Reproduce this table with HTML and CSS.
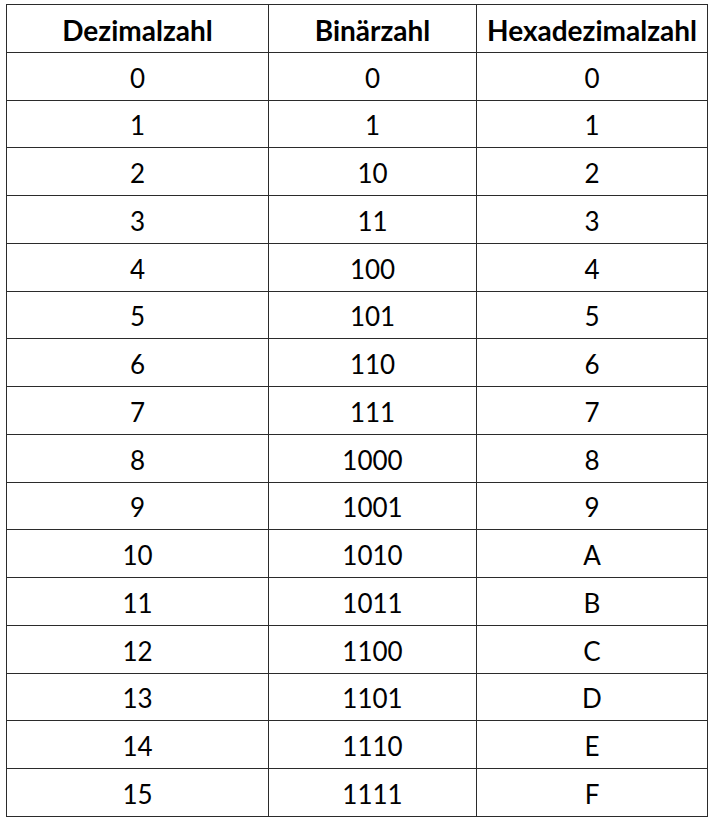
FILE: index.html
```html
<!DOCTYPE html>
<html lang="de">
<head>
<meta charset="utf-8">
<link rel="stylesheet" href="styles.css">
</head>
<body>
<table class="tbl">
<colgroup><col class="c1"><col class="c2"><col class="c3"></colgroup>
<thead>
<tr><th>Dezimalzahl</th><th>Binärzahl</th><th>Hexadezimalzahl</th></tr>
</thead>
<tbody>
<tr><td>0</td><td>0</td><td>0</td></tr>
<tr><td>1</td><td>1</td><td>1</td></tr>
<tr><td>2</td><td>10</td><td>2</td></tr>
<tr><td>3</td><td>11</td><td>3</td></tr>
<tr><td>4</td><td>100</td><td>4</td></tr>
<tr><td>5</td><td>101</td><td>5</td></tr>
<tr><td>6</td><td>110</td><td>6</td></tr>
<tr><td>7</td><td>111</td><td>7</td></tr>
<tr><td>8</td><td>1000</td><td>8</td></tr>
<tr><td>9</td><td>1001</td><td>9</td></tr>
<tr><td>10</td><td>1010</td><td>A</td></tr>
<tr><td>11</td><td>1011</td><td>B</td></tr>
<tr><td>12</td><td>1100</td><td>C</td></tr>
<tr><td>13</td><td>1101</td><td>D</td></tr>
<tr><td>14</td><td>1110</td><td>E</td></tr>
<tr><td>15</td><td>1111</td><td>F</td></tr>
</tbody>
</table>
</body>
</html>
```
FILE: styles.css
```css
html, body {
  margin: 0;
  background: #ffffff;
}
body {
  padding: 4px 0 0 6px;
}
.tbl {
  border-collapse: collapse;
  table-layout: fixed;
  width: 701px;
  font-family: Lato, "Noto Sans", sans-serif;
  color: #000;
}
.c1 { width: 262px; }
.c2 { width: 208px; }
.c3 { width: 231px; }
.tbl th, .tbl td {
  border: 1px solid #2b2b2b;
  height: 47.76px;
  padding: 3px 0 0 0;
  box-sizing: border-box;
  text-align: center;
  vertical-align: middle;
  line-height: 1;
}
.tbl th {
  font-weight: bold;
  font-size: 28px;
}
.tbl td {
  font-weight: normal;
  font-size: 26px;
}
```
